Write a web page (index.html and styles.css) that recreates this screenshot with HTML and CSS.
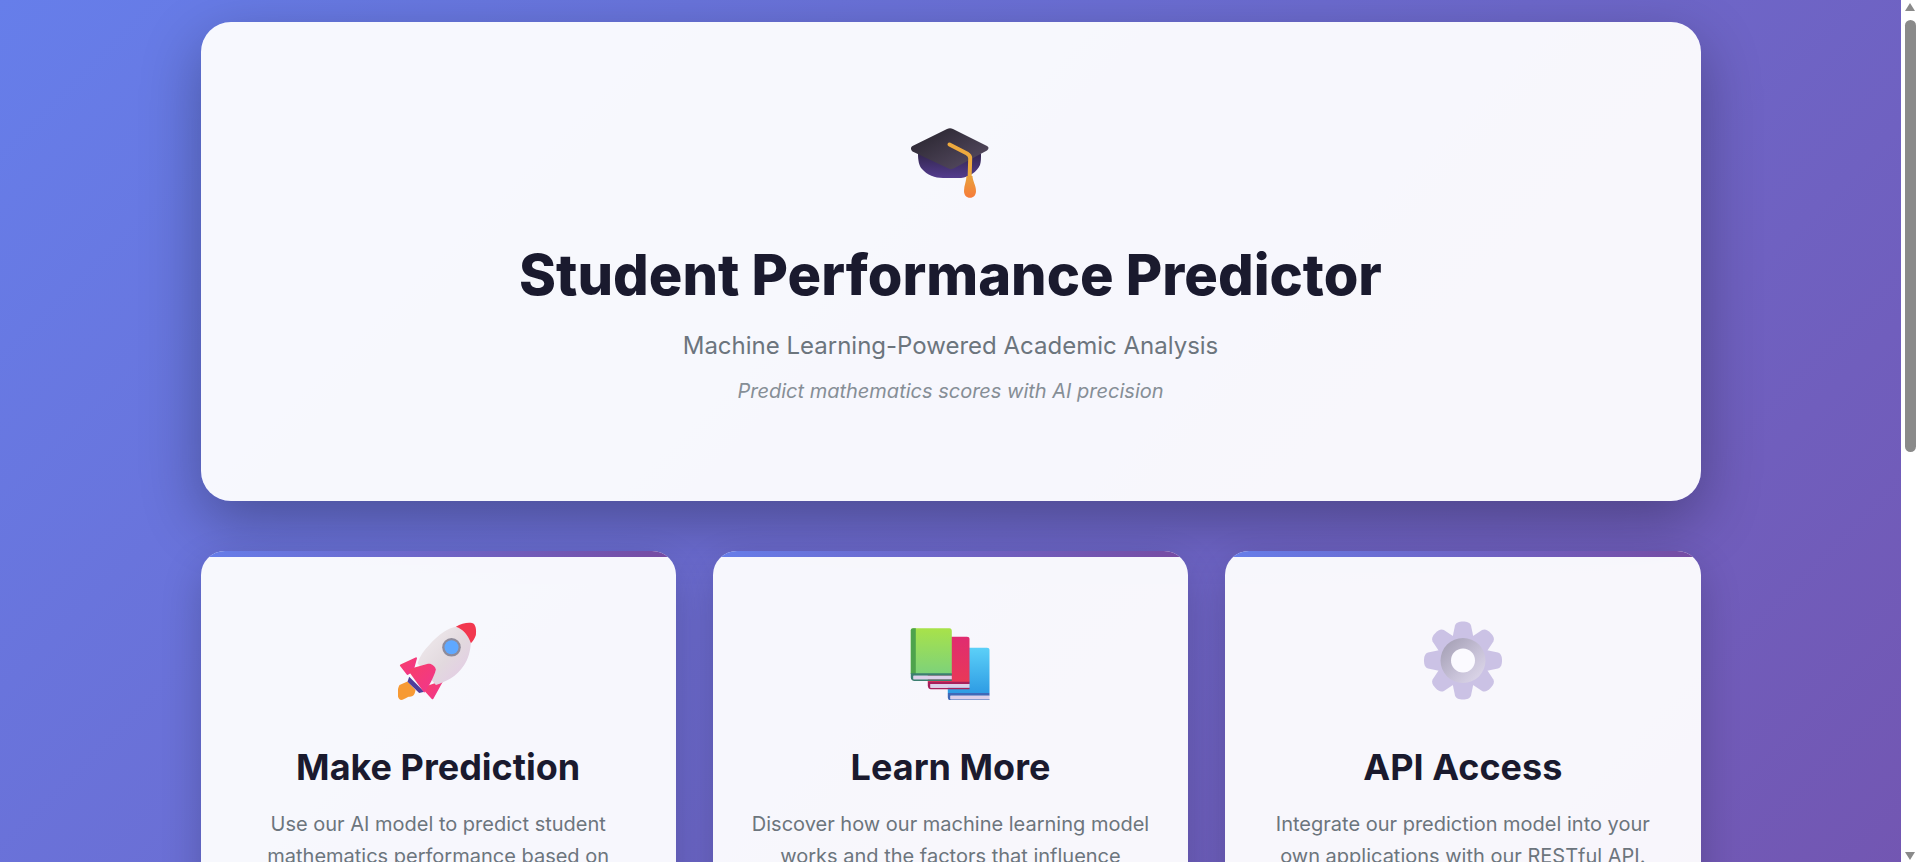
FILE: index.html
```html
<!DOCTYPE html>
<html lang="en">
<head>
    <meta charset="UTF-8">
    <meta name="viewport" content="width=device-width, initial-scale=1.0">
    <title>Student Performance Predictor</title>
    <link rel="stylesheet" href="styles.css">
</head>
<body>
    <svg class="defs" width="0" height="0" aria-hidden="true">
        <defs>
            <linearGradient id="capTop" x1="0" y1="0" x2="1" y2="1">
                <stop offset="0" stop-color="#25222b"/>
                <stop offset="1" stop-color="#5a4e66"/>
            </linearGradient>
            <linearGradient id="capBase" x1="0" y1="0" x2="0" y2="1">
                <stop offset="0" stop-color="#33264f"/>
                <stop offset="1" stop-color="#533c8e"/>
            </linearGradient>
            <linearGradient id="tassel" x1="0" y1="0" x2="0" y2="1">
                <stop offset="0" stop-color="#e8a23c"/>
                <stop offset="1" stop-color="#f77b3a"/>
            </linearGradient>
            <linearGradient id="rocketBody" x1="0" y1="0" x2="1" y2="1">
                <stop offset="0" stop-color="#f3eef1"/>
                <stop offset="0.55" stop-color="#e2d9de"/>
                <stop offset="1" stop-color="#e4c8e8"/>
            </linearGradient>
            <linearGradient id="rocketRed" x1="0" y1="0" x2="1" y2="1">
                <stop offset="0" stop-color="#f83f68"/>
                <stop offset="1" stop-color="#f0358f"/>
            </linearGradient>
            <linearGradient id="bookGreen" x1="0" y1="0" x2="0" y2="1">
                <stop offset="0" stop-color="#a8e24a"/>
                <stop offset="1" stop-color="#7dd27a"/>
            </linearGradient>
            <linearGradient id="bookRed" x1="0" y1="0" x2="0" y2="1">
                <stop offset="0" stop-color="#e02c70"/>
                <stop offset="1" stop-color="#e83858"/>
            </linearGradient>
            <linearGradient id="bookBlue" x1="0" y1="0" x2="0" y2="1">
                <stop offset="0" stop-color="#5cd0f8"/>
                <stop offset="1" stop-color="#2e9ce4"/>
            </linearGradient>
            <linearGradient id="gearFace" x1="0" y1="0" x2="1" y2="1">
                <stop offset="0" stop-color="#d2c9ea"/>
                <stop offset="1" stop-color="#c4bade"/>
            </linearGradient>
            <linearGradient id="gearRing" x1="0" y1="0" x2="1" y2="1">
                <stop offset="0" stop-color="#a09bb0"/>
                <stop offset="0.6" stop-color="#c9c3d9"/>
                <stop offset="1" stop-color="#e2dcee"/>
            </linearGradient>
        </defs>
    </svg>

    <main class="container">
        <header class="hero">
            <svg class="emoji" viewBox="0 0 80 80">
                <path d="M7 34C7 40 8 46 11 49 16 55 24 58 32 58H50C58 57 66 52 69 45 70 42 70 38 70 34Z" fill="url(#capBase)"/>
                <path d="M1.500 26 36 9C38 8 40 8 42 9L76 26C78 27 78 29 76 30.500L43.500 48C41 49.500 39 49.500 36.500 48L1.500 31.500C-.5 30-.5 27 1.500 26Z" fill="url(#capTop)"/>
                <path d="M38.500 24.500 56 33.500C58.500 35 59.300 36 59.200 38.500L58.600 58" fill="none" stroke="#eeaa3e" stroke-width="4" stroke-linecap="round" stroke-linejoin="round"/>
                <path d="M55.500 56H61.500C61.500 61 65 65 65 71 65 75 62.500 77.800 59 77.800S53 75 53 71C53 65 55.500 61 55.500 56Z" fill="url(#tassel)"/>
            </svg>
            <h1>Student Performance Predictor</h1>
            <p class="subtitle">Machine Learning-Powered Academic Analysis</p>
            <p class="tagline">Predict mathematics scores with AI precision</p>
        </header>

        <section class="cards">
            <article class="card">
                <svg class="emoji" viewBox="0 0 80 80">
                    <path d="M1.500 65 9.500 61.500 17.500 70C17 73 16 75.500 14.500 76 12.500 76.800 11 76.500 9.500 77.300 7 78.500 5 80 3 80 0 79-.5 75-.5 72.500-.5 70 .5 67 1.500 65Z" fill="#f79a34"/>
                    <path d="M2.900 45.500 18 38.300 14.500 51 9.500 54Z" fill="url(#rocketRed)" stroke="url(#rocketRed)" stroke-width="2" stroke-linejoin="round"/>
                    <path d="M43.500 62 34.500 78.300 25.500 68.300Z" fill="url(#rocketRed)" stroke="url(#rocketRed)" stroke-width="2" stroke-linejoin="round"/>
                    <path d="M46 11.700C50 9 54 7.500 57.900 6.700 65 9 70 15 72.900 23.300 72 33 70 39 66.200 45 62 51 58 55 52.900 58.300 48 61 43 63.500 37.900 65L19.500 43.300C22 36 26 30 31.200 25 35 20.500 40 15.500 46 11.700Z" fill="url(#rocketBody)"/>
                    <path d="M57.900 6.700C63 3.500 70 2 74 3 78 4 78.500 10 77.900 15 77 18 75 21 72.900 23.300 70 15 65 9 57.900 6.700Z" fill="#f2384f"/>
                    <path d="M11.200 56.700 26.200 71.700 21.200 72.900 9.500 61.700Z" fill="#4f3e9a"/>
                    <path d="M10.500 51C10 50 12 49 13 48.500L30 43.800C33 43 37 46 37.900 49.500 36 57 31 66 26.200 72.700Z" fill="url(#rocketRed)"/>
                    <circle cx="53.500" cy="27.300" r="9.300" fill="#8e8b9b"/>
                    <circle cx="53.500" cy="27.300" r="7" fill="#5fa8ff"/>
                </svg>
                <h2>Make Prediction</h2>
                <p>Use our AI model to predict student mathematics performance based on various factors.</p>
            </article>
            <article class="card">
                <svg class="emoji" viewBox="0 0 80 80">
                    <path d="M37.800 73V30C37.800 28.500 39 27.700 40 27.700H77C78.500 27.700 79.500 28.500 79.500 30V73Z" fill="url(#bookBlue)"/>
                    <path d="M37.800 73H79.500V75.700H40.500V79.300H79.500V80.700H41C39 80.700 37.800 79 37.800 77Z" fill="#3f69b8"/>
                    <path d="M40.500 75.700H79.500V79.300H40.500Z" fill="#dcd0ea"/>
                    <path d="M17.800 62V19C17.800 17.500 19 16.700 20 16.700H57C58.500 16.700 59.500 17.500 59.500 19V62Z" fill="url(#bookRed)"/>
                    <path d="M17.800 61.700H59.500V64H20.500V67.700H59.500V69.300H21C19 69.300 17.800 67.500 17.800 65.500Z" fill="#a81f5c"/>
                    <path d="M20.500 64H59.500V67.700H20.500Z" fill="#dcd0ea"/>
                    <path d="M.8 54V10.500C.8 9 2 8.300 3 8.300H39.500C41 8.300 41.800 9.500 41.800 11V54Z" fill="url(#bookGreen)"/>
                    <path d="M.8 54V10.500C.8 9 2 8.300 3 8.300H5.800V54Z" fill="#4ea34c"/>
                    <path d="M.8 53.300H41.800V55.700H3.500V59.300H41.800V61H4.500C2.500 61 .8 59.500 .8 57.500Z" fill="#3b7f70"/>
                    <path d="M3.500 55.700H41.800V59.300H3.500Z" fill="#dcd0ea"/>
                </svg>
                <h2>Learn More</h2>
                <p>Discover how our machine learning model works and the factors that influence student scores.</p>
            </article>
            <article class="card">
                <svg class="emoji" viewBox="0 0 80 80">
                    <circle cx="40" cy="40.500" r="26" fill="url(#gearFace)"/>
                    <g fill="#cbc2e5">
                        <path d="M29 20 32 5.500C33 2.500 36 1.500 40 1.500S47 2.500 48 5.500L51 20Z"/>
                        <path d="M29 20 32 5.500C33 2.500 36 1.500 40 1.500S47 2.500 48 5.500L51 20Z" transform="rotate(45 40 40.500)"/>
                        <path d="M29 20 32 5.500C33 2.500 36 1.500 40 1.500S47 2.500 48 5.500L51 20Z" transform="rotate(90 40 40.500)"/>
                        <path d="M29 20 32 5.500C33 2.500 36 1.500 40 1.500S47 2.500 48 5.500L51 20Z" transform="rotate(135 40 40.500)"/>
                        <path d="M29 20 32 5.500C33 2.500 36 1.500 40 1.500S47 2.500 48 5.500L51 20Z" transform="rotate(180 40 40.500)"/>
                        <path d="M29 20 32 5.500C33 2.500 36 1.500 40 1.500S47 2.500 48 5.500L51 20Z" transform="rotate(225 40 40.500)"/>
                        <path d="M29 20 32 5.500C33 2.500 36 1.500 40 1.500S47 2.500 48 5.500L51 20Z" transform="rotate(270 40 40.500)"/>
                        <path d="M29 20 32 5.500C33 2.500 36 1.500 40 1.500S47 2.500 48 5.500L51 20Z" transform="rotate(315 40 40.500)"/>
                    </g>
                    <circle cx="40" cy="40.500" r="22.500" fill="url(#gearRing)"/>
                    <circle cx="40" cy="40.500" r="12" fill="#fbfaff"/>
                </svg>
                <h2>API Access</h2>
                <p>Integrate our prediction model into your own applications with our RESTful API.</p>
            </article>
        </section>
    </main>

    <div class="scrollbar">
        <span class="arrow-up"></span>
        <span class="thumb"></span>
        <span class="arrow-down"></span>
    </div>
</body>
</html>
```

FILE: styles.css
```css
* {
    margin: 0;
    padding: 0;
    box-sizing: border-box;
}
html {
    background: #fff;
}
body {
    font-family: Inter, "Liberation Sans", sans-serif;
    min-height: 1650px;
    margin-right: 17px;
    padding: 22px 0;
    background: linear-gradient(135deg, #667eea 0%, #764ba2 100%);
    color: #1a1a2e;
}
.defs {
    position: absolute;
}
.container {
    width: 1500px;
    margin: 0 auto;
}
.hero {
    height: 479px;
    margin-bottom: 50px;
    padding-top: 98px;
    text-align: center;
    background: rgba(255, 255, 255, 0.95);
    border-radius: 30px;
    box-shadow: 0 20px 60px rgba(0, 0, 0, 0.3);
}
.emoji {
    display: block;
    width: 80px;
    height: 80px;
    margin: 0 auto;
}
h1 {
    margin-top: 42px;
    font-size: 56px;
    font-weight: 800;
    line-height: 1.2;
}
.subtitle {
    margin-top: 22px;
    font-size: 24px;
    color: #6c757d;
}
.tagline {
    margin-top: 19px;
    font-size: 20px;
    font-style: italic;
    color: #868e96;
}
.cards {
    display: grid;
    grid-template-columns: repeat(3, 1fr);
    gap: 37px;
}
.card {
    position: relative;
    overflow: hidden;
    padding: 69px 32px 40px;
    text-align: center;
    background: rgba(255, 255, 255, 0.95);
    border-radius: 24px;
    box-shadow: 0 15px 40px rgba(0, 0, 0, 0.2);
}
.card::before {
    content: "";
    position: absolute;
    top: 0;
    left: 0;
    right: 0;
    height: 6px;
    background: linear-gradient(90deg, #667eea, #764ba2);
}
h2 {
    margin-top: 46px;
    font-size: 36px;
    font-weight: 700;
    line-height: 1.2;
}
.card p {
    margin-top: 19px;
    font-size: 20px;
    line-height: 1.6;
    color: #6c757d;
}
/* headless browser hides the real scrollbar, so it is drawn here */
.scrollbar {
    position: fixed;
    top: 0;
    right: 0;
    width: 17px;
    height: 100vh;
    background: #fff;
}
.thumb {
    position: absolute;
    top: 20px;
    left: 4px;
    width: 11px;
    height: 432px;
    background: #8a8a8a;
    border-radius: 6px;
}
.arrow-up, .arrow-down {
    position: absolute;
    left: 4px;
    width: 0;
    height: 0;
    border-left: 5.500px solid transparent;
    border-right: 5.500px solid transparent;
}
.arrow-up {
    top: 3px;
    border-bottom: 8px solid #8a8a8a;
}
.arrow-down {
    bottom: 2px;
    border-top: 8px solid #8a8a8a;
}
```
